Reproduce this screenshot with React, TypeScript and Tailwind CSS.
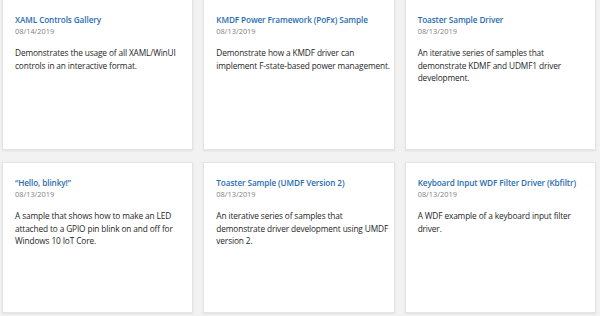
const samples = [
  {
    title: "XAML Controls Gallery",
    date: "08/14/2019",
    text: "Demonstrates the usage of all XAML/WinUI controls in an interactive format.",
  },
  {
    title: "KMDF Power Framework (PoFx) Sample",
    date: "08/13/2019",
    text: "Demonstrate how a KMDF driver can implement F-state-based power management.",
  },
  {
    title: "Toaster Sample Driver",
    date: "08/13/2019",
    text: "An iterative series of samples that demonstrate KDMF and UDMF1 driver development.",
  },
  {
    title: "\u201cHello, blinky!\u201d",
    date: "08/13/2019",
    text: "A sample that shows how to make an LED attached to a GPIO pin blink on and off for Windows 10 IoT Core.",
  },
  {
    title: "Toaster Sample (UMDF Version 2)",
    date: "08/13/2019",
    text: "An iterative series of samples that demonstrate driver development using UMDF version 2.",
  },
  {
    title: "Keyboard Input WDF Filter Driver (Kbfiltr)",
    date: "08/13/2019",
    text: "A WDF example of a keyboard input filter driver.",
  },
];

export default function App() {
  return (
    <div className="w-[600px] h-[316px] overflow-hidden bg-[#f2f2f2] font-['Segoe_UI','Open_Sans',sans-serif]">
      <div className="grid grid-cols-3 gap-x-[10px] gap-y-[12px] px-[2px] pr-[4px] -mt-[1px]">
        {samples.map((s) => (
          <div
            key={s.title}
            className="h-[151px] bg-white border border-[#e4e4e4] shadow-[0_1px_2px_rgba(0,0,0,0.08)] pl-[12px] pr-[2px] pt-[14px]"
          >
            <a className="block text-[8.2px] leading-[12px] font-semibold tracking-[-0.1px] text-[#2a6db0] whitespace-nowrap">
              {s.title}
            </a>
            <div className="text-[7.4px] leading-[11px] text-[#808080]">{s.date}</div>
            <p className="mt-[10px] text-[8.3px] leading-[12.7px] tracking-[-0.13px] text-[#262626]">{s.text}</p>
          </div>
        ))}
      </div>
    </div>
  );
}
